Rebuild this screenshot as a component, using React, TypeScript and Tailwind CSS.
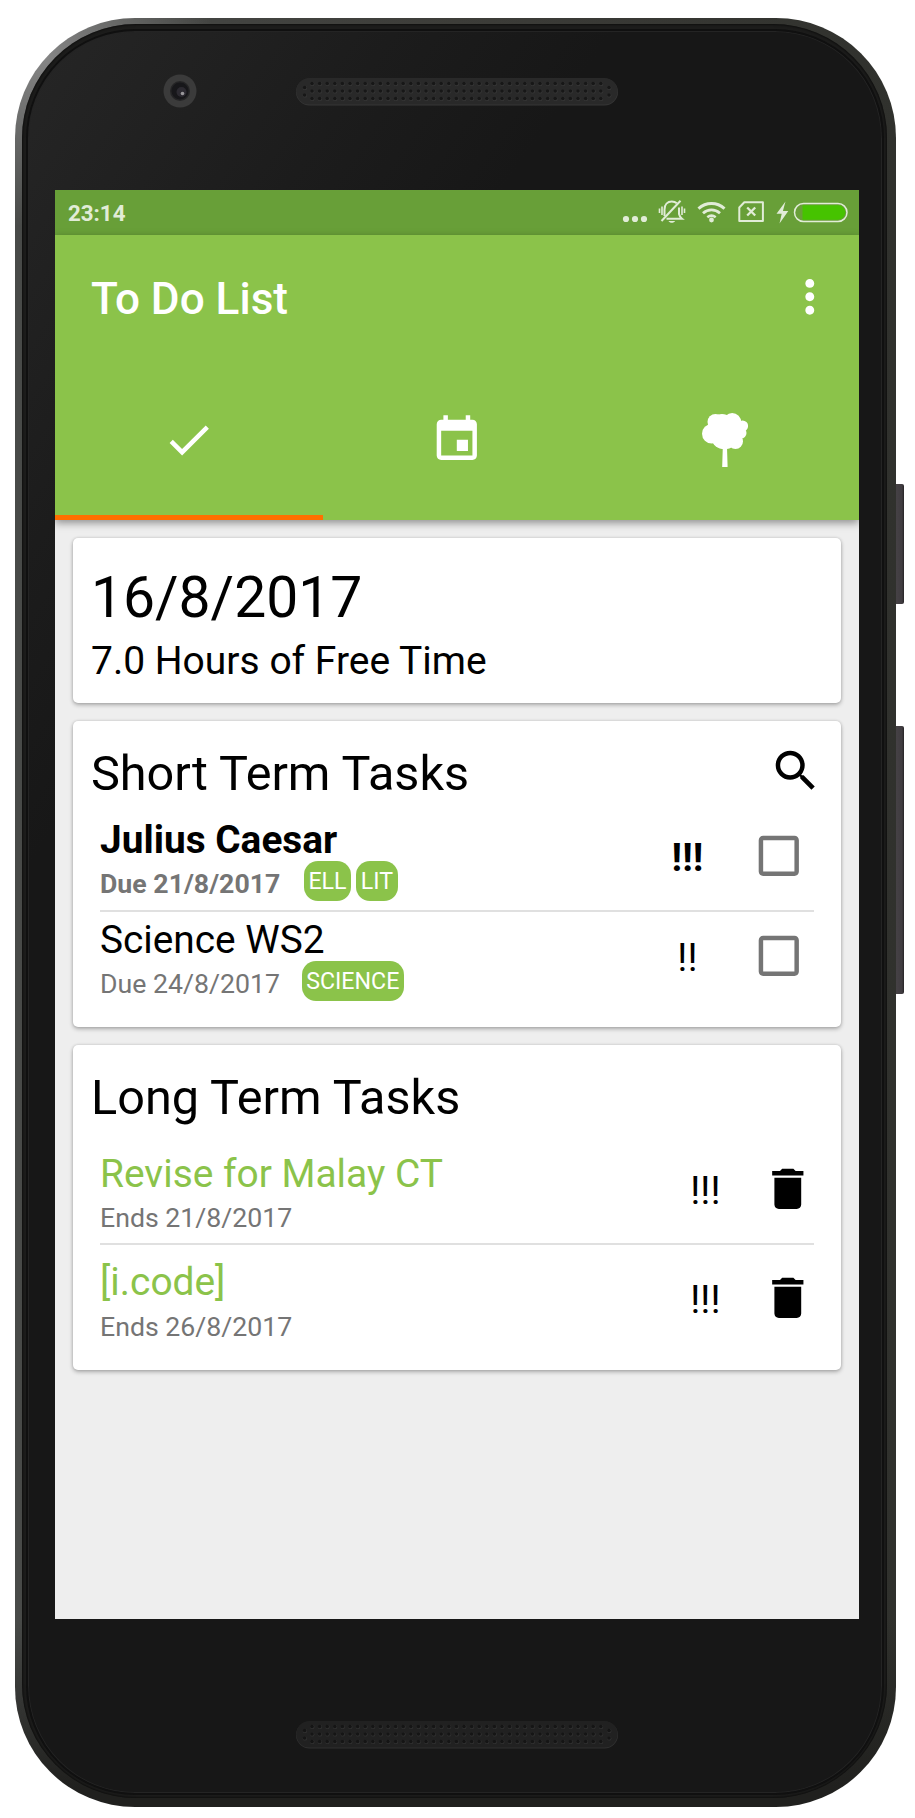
import type { ReactNode } from "react";

const ICONS = {
  more: "M12 8c1.1 0 2-.9 2-2s-.9-2-2-2-2 .9-2 2 .9 2 2 2zm0 2c-1.1 0-2 .9-2 2s.9 2 2 2 2-.9 2-2-.9-2-2-2zm0 6c-1.1 0-2 .9-2 2s.9 2 2 2 2-.9 2-2-.9-2-2-2z",
  check: "M9 16.17L4.83 12l-1.42 1.41L9 19 21 7l-1.41-1.41z",
  event:
    "M17 12h-5v5h5v-5zM16 1v2H8V1H6v2H5c-1.11 0-1.99.9-1.99 2L3 19c0 1.1.89 2 2 2h14c1.1 0 2-.9 2-2V5c0-1.1-.9-2-2-2h-1V1h-2zm3 18H5V8h14v11z",
  search:
    "M15.5 14h-.79l-.28-.27C15.41 12.59 16 11.11 16 9.5 16 5.91 13.09 3 9.5 3S3 5.91 3 9.5 5.91 16 9.5 16c1.61 0 3.09-.59 4.23-1.57l.27.28v.79l5 4.99L20.49 19l-4.99-5zm-6 0C7.01 14 5 11.99 5 9.5S7.01 5 9.5 5 14 7.01 14 9.5 11.99 14 9.5 14z",
  box: "M19 5v14H5V5h14m0-2H5c-1.1 0-2 .9-2 2v14c0 1.1.9 2 2 2h14c1.1 0 2-.9 2-2V5c0-1.1-.9-2-2-2z",
  trash:
    "M6 19c0 1.1.9 2 2 2h8c1.1 0 2-.9 2-2V7H6v12zM19 4h-3.5l-1-1h-5l-1 1H5v2h14V4z",
};

function Icon({ name, className = "" }: { name: keyof typeof ICONS; className?: string }) {
  return (
    <svg viewBox="0 0 24 24" fill="currentColor" className={`h-[53.6px] w-[53.6px] shrink-0 ${className}`}>
      <path d={ICONS[name]} />
    </svg>
  );
}

function Tree() {
  return (
    <svg viewBox="0 0 46 54" fill="currentColor" className="h-[54px] w-[46px]">
      <circle cx="9.8" cy="20.8" r="9.8" />
      <circle cx="13.5" cy="9" r="8" />
      <circle cx="20" cy="12" r="11" />
      <circle cx="30.2" cy="9" r="9" />
      <circle cx="40.5" cy="13" r="5.6" />
      <circle cx="39" cy="20" r="5.5" />
      <circle cx="33.5" cy="28.5" r="7.5" />
      <ellipse cx="22.5" cy="26" rx="12.5" ry="10.3" />
      <circle cx="28" cy="18" r="13" />
      <path d="M20.8 34h4.2l.6 20h-5.4z" />
    </svg>
  );
}

function Grille({ tone }: { tone: "top" | "bottom" }) {
  const dots: [number, number][] = [
    [8.6, 9.5],
    [8.6, 17],
    [313, 9.5],
    [313, 17],
  ];
  for (let i = 0; i < 39; i++) {
    for (let j = 0; j < 3; j++) dots.push([16 + i * 7.6, 5.5 + j * 7.5]);
  }
  const base = tone === "top" ? "#292929" : "#212121";
  const rim = tone === "top" ? "#363636" : "#313131";
  const hole = tone === "top" ? "#171717" : "#151515";
  return (
    <svg viewBox="0 0 322 28" className="h-[28px] w-[322px]">
      <rect x="0" y="0.5" width="322" height="27" rx="13.5" fill={rim} />
      <rect x="0.3" y="0" width="321.2" height="26.5" rx="13.2" fill={base} />
      {dots.map(([x, y]) => (
        <g key={`${x}-${y}`}>
          <circle cx={x + 0.3} cy={y + 0.4} r="2.2" fill={rim} />
          <circle cx={x} cy={y} r="1.8" fill={hole} />
        </g>
      ))}
    </svg>
  );
}

function StatusIcons() {
  return (
    <svg viewBox="0 0 240 45" className="h-[45px] w-[240px]" fill="none" stroke="#e1ecd7">
      <g fill="#e1ecd7" stroke="none">
        <circle cx="7" cy="29" r="3.1" />
        <circle cx="16" cy="29" r="3.1" />
        <circle cx="25" cy="29" r="3.1" />
      </g>
      <g strokeWidth="2">
        <path d="M45.500 26V19.500c0-5 3-8 7.300-8 2 0 3.700.6 5 1.800M60 17.500v6.500c.5 2.300 1.500 3.500 3 4.700H47.500" />
        <path d="M61.500 10.800L42.500 31" />
        <path d="M43 16.500v8.500M40.500 18.500v4.500M63 16.500v8.500M65.500 18.500v4.500" strokeWidth="1.600" />
        <path d="M49.500 31c1 2.400 5.600 2.400 6.600 0z" fill="#e1ecd7" stroke="none" />
      </g>
      <g strokeWidth="3">
        <path d="M79.500 18.700c7.500-6.800 18.500-6.800 26 0" />
        <path d="M84 23.300c5-4.500 12-4.500 17 0" strokeWidth="2.800" />
        <path d="M88.300 27.200c2.700-2 5.700-2 8.400 0" strokeWidth="2.600" />
        <circle cx="92.500" cy="30" r="2.400" fill="#e1ecd7" stroke="none" />
      </g>
      <path d="M120.300 17.500l5-5.200h18.600v18.700h-23.600z" strokeWidth="2" strokeLinejoin="round" />
      <path d="M128.200 17.500l8 8M136.200 17.500l-8 8" strokeWidth="2.300" />
      <path d="M166.500 11.500l-9 12.300h5.200l-2.200 9.700 8.800-12.600h-5.400z" fill="#e1ecd7" stroke="none" />
      <rect x="175.500" y="13.500" width="52.500" height="18" rx="9" strokeWidth="1.500" />
      <path d="M183.500 15.300h35.500a7.200 7.200 0 0 1 0 14.400h-35.500z" fill="#46c300" stroke="none" />
    </svg>
  );
}

function Card({ className, children }: { className: string; children: ReactNode }) {
  return (
    <section
      className={`shrink-0 rounded-[5px] bg-white pl-[18px] text-black shadow-[0_2px_4px_rgba(0,0,0,0.28),0_0_3px_rgba(0,0,0,0.14)] ${className}`}
    >
      {children}
    </section>
  );
}

function Chip({ label, className = "" }: { label: string; className?: string }) {
  return (
    <span
      className={`flex h-[40px] items-center justify-center rounded-[14px] bg-[#8bc34a] pt-px text-[23.2px] leading-[28px] text-white ${className}`}
    >
      {label}
    </span>
  );
}

function ShortTask(p: { title: string; due: string; level: string; bold?: boolean; last?: boolean; chips: ReactNode }) {
  return (
    <li
      className={`flex h-[100px] w-[714px] border-b-2 ${p.last ? "border-transparent" : "border-[#e0e0e0]"} ${p.bold ? "font-bold" : ""}`}
    >
      <div className="flex flex-1 flex-col pt-[5.500px]">
        <span className="h-[43.500px] text-[38.800px] leading-[45.500px]">{p.title}</span>
        <div className="flex h-[40px] items-start">
          <span className="w-[202px] pt-[8px] text-[26.700px] leading-[31px] text-[#757575]">{p.due}</span>
          <div className="flex font-normal">{p.chips}</div>
        </div>
      </div>
      <span className="w-[60px] pt-[23.500px] text-center text-[39px] leading-[47px]">{p.level}</span>
      <Icon name="box" className="mt-[17px] mr-[8.500px] ml-[34.500px] text-[#757575]" />
    </li>
  );
}

function LongTask(p: { title: string; ends: string; last?: boolean }) {
  return (
    <li className={`flex h-[108.500px] w-[714px] border-b-2 ${p.last ? "border-transparent" : "border-[#e0e0e0]"}`}>
      <div className="flex flex-1 flex-col pt-[13.500px]">
        <span className="text-[38.900px] leading-[47px] text-[#8bc34a]">{p.title}</span>
        <span className="pt-[6.500px] text-[26.700px] leading-[31px] text-[#757575]">{p.ends}</span>
      </div>
      <span className="w-[60px] pt-[32px] text-center text-[39px] leading-[47px]">!!!</span>
      <Icon name="trash" className="mt-[26px] mr-[-0.500px] ml-[25.500px]" />
    </li>
  );
}

function Screen() {
  return (
    <div className="ml-[28px] flex h-[1429px] w-[804px] flex-col overflow-hidden bg-[#eee]">
      <div className="z-10 flex h-[45px] shrink-0 items-center justify-between bg-[#689f38] pl-[13px]">
        <span className="text-[22.300px] leading-[28px] font-bold text-[#e1ecd7]">23:14</span>
        <StatusIcons />
      </div>
      <header className="z-10 flex h-[285px] shrink-0 flex-col bg-[#8bc34a] text-white shadow-[0_3px_8px_rgba(0,0,0,0.4)]">
        <div className="flex h-[125px] items-center justify-between pr-[22.500px] pl-[36px]">
          <h1 className="pt-[3px] text-[44.100px] leading-[52px] font-medium">To Do List</h1>
          <Icon name="more" className="-mt-px" />
        </div>
        <nav className="grid flex-1 grid-cols-3">
          <div className="flex items-center justify-center border-b-[5px] border-[#ff6f00] pt-[5px]">
            <Icon name="check" />
          </div>
          <div className="flex items-center justify-center">
            <Icon name="event" />
          </div>
          <div className="flex items-center justify-center">
            <Tree />
          </div>
        </nav>
      </header>
      <main className="flex flex-col gap-[18px] px-[18px] pt-[18px]">
        <Card className="h-[164.500px] pt-[25.500px]">
          <div className="text-[57px] leading-[68px]">16/8/2017</div>
          <div className="pt-[6px] text-[39px] leading-[47px]">7.0 Hours of Free Time</div>
        </Card>
        <Card className="h-[306px] pt-[23px]">
          <div className="flex h-[68px] items-start justify-between pr-[18px]">
            <h2 className="pt-px text-[48.600px] leading-[58px]">Short Term Tasks</h2>
            <Icon name="search" />
          </div>
          <ul className="pl-[9px]">
            <ShortTask
              title="Julius Caesar"
              due="Due 21/8/2017"
              level="!!!"
              bold
              chips={
                <>
                  <Chip label="ELL" className="ml-[2px] w-[47px]" />
                  <Chip label="LIT" className="ml-[5px] w-[42px]" />
                </>
              }
            />
            <ShortTask
              title="Science WS2"
              due="Due 24/8/2017"
              level="!!"
              last
              chips={<Chip label="SCIENCE" className="w-[101.500px]" />}
            />
          </ul>
        </Card>
        <Card className="h-[325px] pt-[23.500px]">
          <h2 className="h-[68px] pt-px text-[48.600px] leading-[58px]">Long Term Tasks</h2>
          <ul className="pl-[9px]">
            <LongTask title="Revise for Malay CT" ends="Ends 21/8/2017" />
            <LongTask title="[i.code]" ends="Ends 26/8/2017" last />
          </ul>
        </Card>
      </main>
    </div>
  );
}

export default function App() {
  return (
    <div className="flex h-[1818px] w-[915px] items-start overflow-hidden bg-white pt-[18px] pl-[15px] font-['Roboto','Noto_Sans',sans-serif]">
      <div className="h-[1789px] w-[881px] shrink-0 rounded-[120px] bg-[radial-gradient(circle_at_30px_40px,#858585_0,transparent_170px),linear-gradient(to_bottom,transparent_1600px,#20201e_1770px),linear-gradient(to_right,#484a48,#3d3d39_50%,#30312d)] pt-[6px] pr-[9px] pb-[9px] pl-[7px]">
        <div className="h-full rounded-[114px] bg-[#1c1c1b] pt-[5px] pr-[3px] pb-[3px] pl-[4px] shadow-[inset_0_0_3px_#000]">
          <div className="flex h-full flex-col rounded-[109px] border-2 border-[#101010] bg-[linear-gradient(125deg,#262626_0,#1c1c1c_300px,#171717_480px)] shadow-[inset_0_0_0_1px_#242424]">
            <div className="flex h-[159px] shrink-0 items-start pt-[43px] pl-[135px]">
              <svg viewBox="0 0 34 34" className="h-[34px] w-[34px]">
                <circle cx="17" cy="17" r="16.500" fill="#3b3b3b" />
                <circle cx="17" cy="17" r="10" fill="#252526" />
                <circle cx="17" cy="17" r="8.500" fill="#17171a" />
                <circle cx="18.500" cy="18" r="5" fill="#2c2a31" />
                <circle cx="19.500" cy="19.500" r="1.800" fill="#99979b" />
              </svg>
              <div className="pt-[4px] pl-[99px]">
                <Grille tone="top" />
              </div>
            </div>
            <div className="-ml-px">
              <Screen />
            </div>
            <div className="pt-[101.500px] pl-[268px]">
              <Grille tone="bottom" />
            </div>
          </div>
        </div>
      </div>
      <div className="flex w-[8px] flex-col gap-[122px] pt-[465.500px]">
        <div className="h-[120px] rounded-r-[2px] bg-[linear-gradient(to_right,#454145,#403c40_75%,#252325)]" />
        <div className="h-[268px] rounded-r-[2px] bg-[linear-gradient(to_right,#454145,#403c40_75%,#252325)]" />
      </div>
    </div>
  );
}
